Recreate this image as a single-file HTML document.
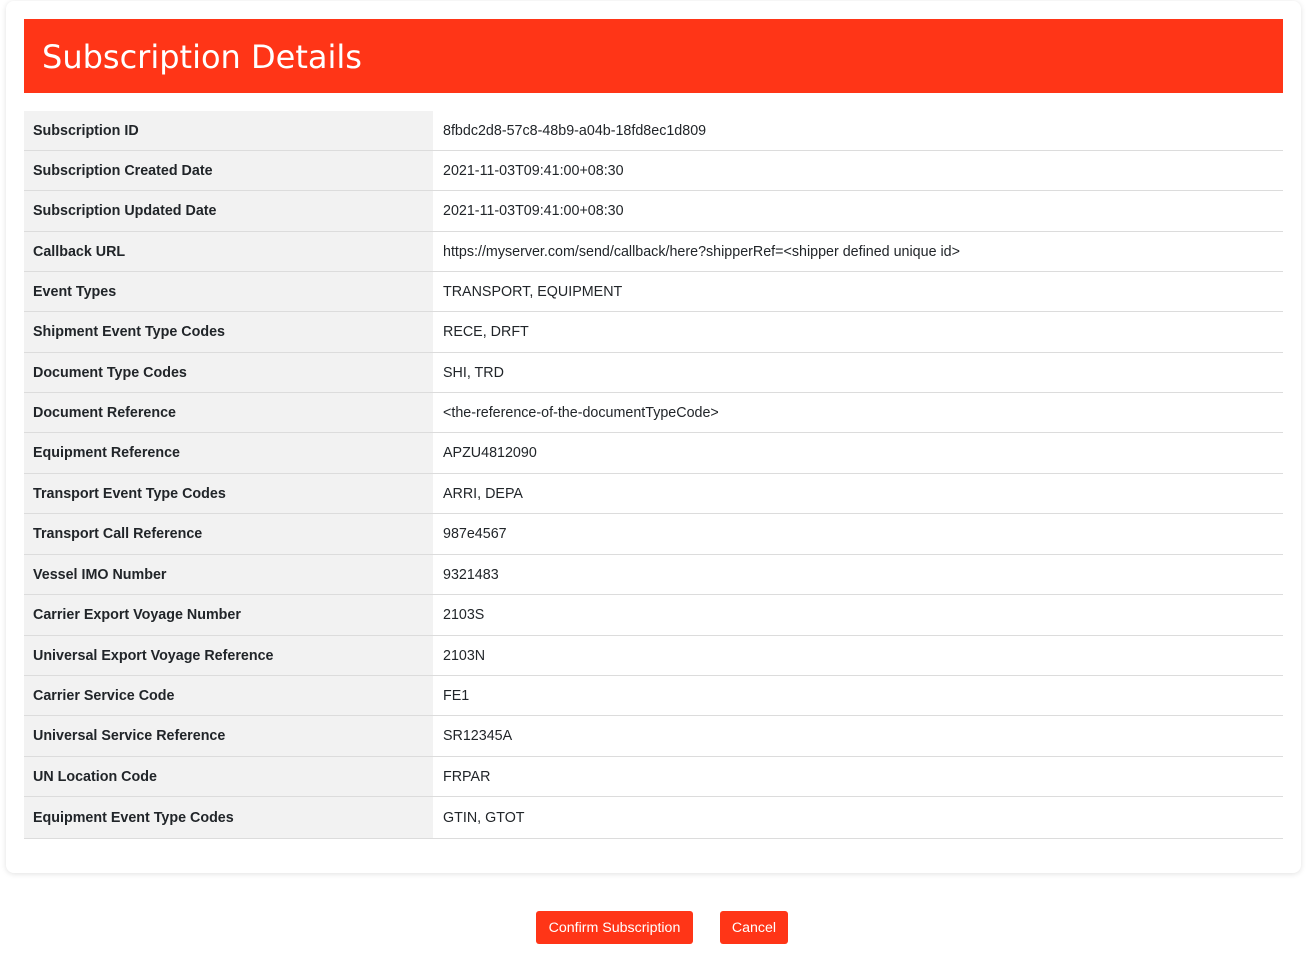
<!DOCTYPE html>
<html><head><meta charset="utf-8"><style>
body{margin:0;background:#fff;font-family:"Liberation Sans",sans-serif;width:1313px;height:957px;position:relative;overflow:hidden}
.card{position:absolute;left:6px;top:1px;width:1295px;height:872px;border-radius:8px;box-shadow:0 1px 6px rgba(0,0,0,0.12);background:#fff}
.hdr{position:absolute;left:24px;top:19px;width:1259px;height:74px;background:#ff3517;color:#fff;font-family:"DejaVu Sans","Liberation Sans",sans-serif;font-size:32px;line-height:76px;box-sizing:border-box;padding-left:18px}
.row{position:absolute;left:24px;width:1259px;border-bottom:1px solid #dcdcdc;box-sizing:border-box;font-size:14.3px;color:#212529}
.row .l{position:absolute;left:0;top:0;bottom:0;width:409px;background:#f2f2f2;font-weight:bold;padding-left:9px;box-sizing:border-box;display:flex;align-items:center}
.row .v{position:absolute;left:419px;top:0;bottom:0;display:flex;align-items:center}
.btn{position:absolute;top:911px;height:33px;background:#ff3517;color:#fff;border-radius:3px;font-size:14.2px;line-height:34px;text-align:center}
</style></head><body>
<div class="card"></div>
<div class="hdr">Subscription Details</div>
<div class="row" style="top:111px;height:40px"><div class="l">Subscription ID</div><div class="v">8fbdc2d8-57c8-48b9-a04b-18fd8ec1d809</div></div>
<div class="row" style="top:151px;height:40px"><div class="l">Subscription Created Date</div><div class="v">2021-11-03T09:41:00+08:30</div></div>
<div class="row" style="top:191px;height:41px"><div class="l">Subscription Updated Date</div><div class="v">2021-11-03T09:41:00+08:30</div></div>
<div class="row" style="top:232px;height:40px"><div class="l">Callback URL</div><div class="v">https://myserver.com/send/callback/here?shipperRef=&lt;shipper defined unique id&gt;</div></div>
<div class="row" style="top:272px;height:40px"><div class="l">Event Types</div><div class="v">TRANSPORT, EQUIPMENT</div></div>
<div class="row" style="top:312px;height:41px"><div class="l">Shipment Event Type Codes</div><div class="v">RECE, DRFT</div></div>
<div class="row" style="top:353px;height:40px"><div class="l">Document Type Codes</div><div class="v">SHI, TRD</div></div>
<div class="row" style="top:393px;height:40px"><div class="l">Document Reference</div><div class="v">&lt;the-reference-of-the-documentTypeCode&gt;</div></div>
<div class="row" style="top:433px;height:41px"><div class="l">Equipment Reference</div><div class="v">APZU4812090</div></div>
<div class="row" style="top:474px;height:40px"><div class="l">Transport Event Type Codes</div><div class="v">ARRI, DEPA</div></div>
<div class="row" style="top:514px;height:41px"><div class="l">Transport Call Reference</div><div class="v">987e4567</div></div>
<div class="row" style="top:555px;height:40px"><div class="l">Vessel IMO Number</div><div class="v">9321483</div></div>
<div class="row" style="top:595px;height:41px"><div class="l">Carrier Export Voyage Number</div><div class="v">2103S</div></div>
<div class="row" style="top:636px;height:40px"><div class="l">Universal Export Voyage Reference</div><div class="v">2103N</div></div>
<div class="row" style="top:676px;height:40px"><div class="l">Carrier Service Code</div><div class="v">FE1</div></div>
<div class="row" style="top:716px;height:41px"><div class="l">Universal Service Reference</div><div class="v">SR12345A</div></div>
<div class="row" style="top:757px;height:40px"><div class="l">UN Location Code</div><div class="v">FRPAR</div></div>
<div class="row" style="top:797px;height:42px"><div class="l">Equipment Event Type Codes</div><div class="v">GTIN, GTOT</div></div>
<div class="btn" style="left:536px;width:157px">Confirm Subscription</div>
<div class="btn" style="left:720px;width:68px">Cancel</div>
</body></html>
